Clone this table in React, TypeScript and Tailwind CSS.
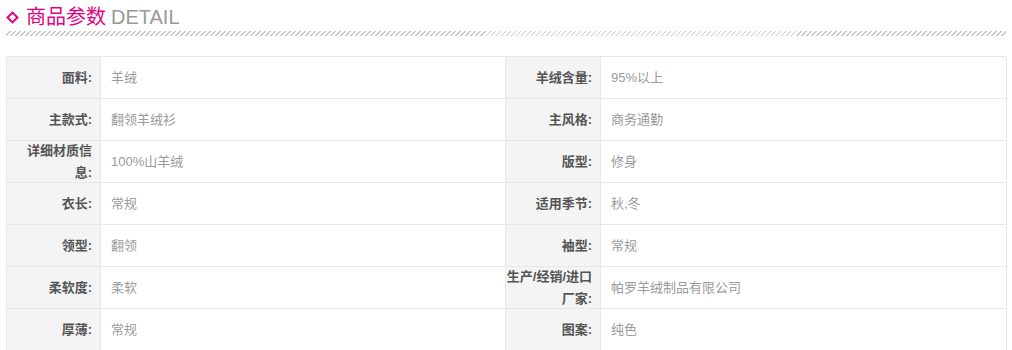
import React from 'react'

type Param = { label: React.ReactNode; value: string }

const rows: [Param, Param][] = [
  [{ label: '面料:', value: '羊绒' }, { label: '羊绒含量:', value: '95%以上' }],
  [{ label: '主款式:', value: '翻领羊绒衫' }, { label: '主风格:', value: '商务通勤' }],
  [
    { label: <>详细材质信<br />息:</>, value: '100%山羊绒' },
    { label: '版型:', value: '修身' },
  ],
  [{ label: '衣长:', value: '常规' }, { label: '适用季节:', value: '秋,冬' }],
  [{ label: '领型:', value: '翻领' }, { label: '袖型:', value: '常规' }],
  [
    { label: '柔软度:', value: '柔软' },
    { label: <>生产/经销/进口<br />厂家:</>, value: '帕罗羊绒制品有限公司' },
  ],
  [{ label: '厚薄:', value: '常规' }, { label: '图案:', value: '纯色' }],
]

function LabelCell({ children }: { children: React.ReactNode }) {
  return (
    <div className="h-[42px] flex items-center justify-end text-right pr-[8px] bg-[#f4f4f4] border-r border-b border-[#e8e8e8] text-[13px] leading-[22px] font-bold text-[#555] whitespace-nowrap">
      <span>{children}</span>
    </div>
  )
}

function ValueCell({ children }: { children: React.ReactNode }) {
  return (
    <div className="h-[42px] flex items-center pl-[10px] bg-white border-r border-b border-[#e8e8e8] text-[13px] text-[#9a9a9a]">
      {children}
    </div>
  )
}

export default function App() {
  return (
    <div className="w-[1012px] h-[350px] overflow-hidden bg-white px-[6px] font-['Liberation_Sans','Noto_Sans_CJK_SC',sans-serif]">
      {/* Title */}
      <div className="flex items-center h-[28px] mt-[3px]">
        <span className="ml-[2px] mr-[9px] w-[9px] h-[9px] border-2 border-[#e4007f] rotate-45" />
        <span className="text-[20px] leading-[28px] text-[#e4007f]">商品参数</span>
        <span className="ml-[5px] text-[20px] leading-[28px] text-[#999]">DETAIL</span>
      </div>
      <div className="h-[5px] w-full bg-[repeating-linear-gradient(135deg,transparent_0,transparent_2.4px,#c8c8c8_2.4px,#c8c8c8_3.54px)]" />

      {/* Params table */}
      <div className="mt-[20px] w-[1000px] grid grid-cols-[94px_405px_95px_406px] border-t border-l border-[#e8e8e8]">
        {rows.map(([a, b], i) => (
          <React.Fragment key={i}>
            <LabelCell>{a.label}</LabelCell>
            <ValueCell>{a.value}</ValueCell>
            <LabelCell>{b.label}</LabelCell>
            <ValueCell>{b.value}</ValueCell>
          </React.Fragment>
        ))}
      </div>
    </div>
  )
}
